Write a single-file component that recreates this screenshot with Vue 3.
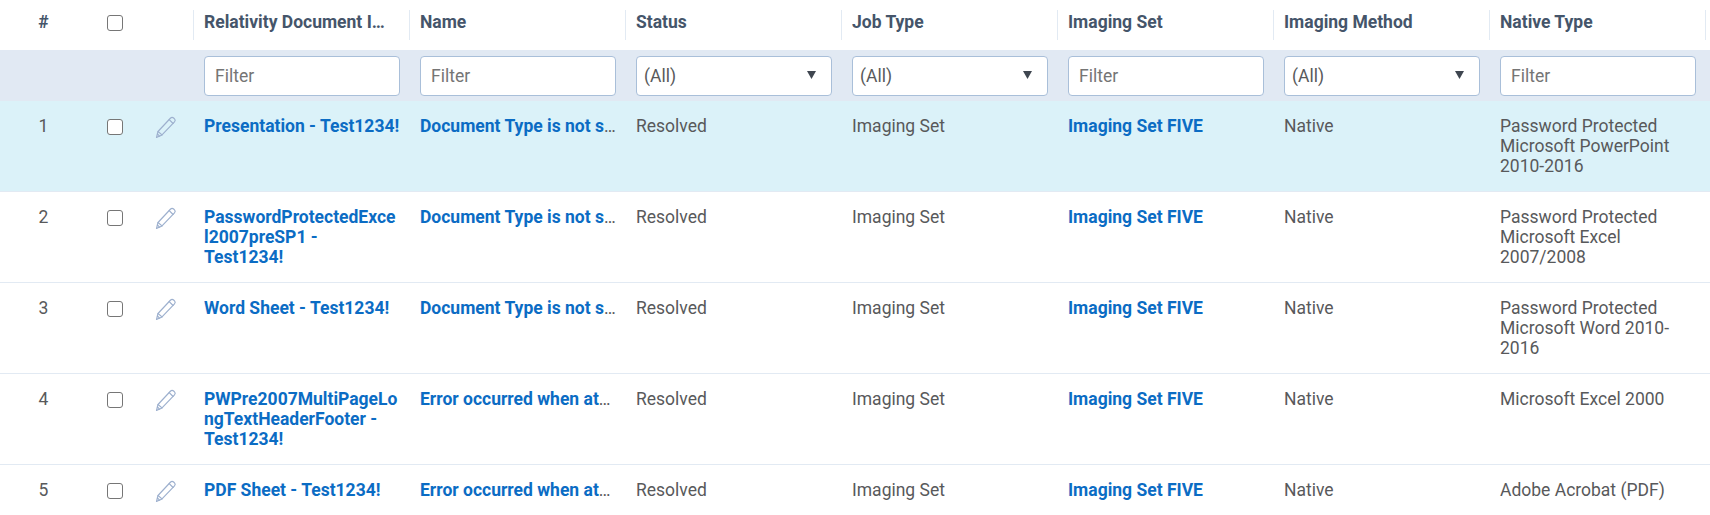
<script setup>
const columns = [
  { label: 'Relativity Document Identifier', filter: 'input' },
  { label: 'Name', filter: 'input' },
  { label: 'Status', filter: 'select' },
  { label: 'Job Type', filter: 'select' },
  { label: 'Imaging Set', filter: 'input' },
  { label: 'Imaging Method', filter: 'select' },
  { label: 'Native Type', filter: 'input' },
]
const typeErr = 'Document Type is not supported'
const attemptErr = 'Error occurred when attempting to image'
const rows = [
  { n: 1, doc: 'Presentation - Test1234!', name: typeErr, native: 'Password Protected Microsoft PowerPoint 2010-2016', active: true },
  { n: 2, doc: 'PasswordProtectedExcel2007preSP1 - Test1234!', name: typeErr, native: 'Password Protected Microsoft Excel 2007/2008' },
  { n: 3, doc: 'Word Sheet - Test1234!', name: typeErr, native: 'Password Protected Microsoft Word 2010-2016' },
  { n: 4, doc: 'PWPre2007MultiPageLongTextHeaderFooter - Test1234!', name: attemptErr, native: 'Microsoft Excel 2000' },
  { n: 5, doc: 'PDF Sheet - Test1234!', name: attemptErr, native: 'Adobe Acrobat (PDF)' },
]
</script>

<template>
  <div class="table">
    <div class="row head">
      <div class="num">#</div>
      <div class="check"><input type="checkbox" class="box" /></div>
      <div class="edit"></div>
      <div v-for="c in columns" :key="c.label" class="th">
        <span class="clip">{{ c.label }}</span>
      </div>
      <div class="th end"></div>
    </div>
    <div class="row filters">
      <div></div>
      <div></div>
      <div></div>
      <div v-for="c in columns" :key="c.label" class="fcell">
        <input v-if="c.filter === 'input'" class="field" placeholder="Filter" />
        <div v-else class="field pick">
          <span>(All)</span>
          <svg class="tri" width="9" height="8" viewBox="0 0 9 8"><path d="M0 0h9L4.5 8z" /></svg>
        </div>
      </div>
      <div></div>
    </div>
    <div v-for="r in rows" :key="r.n" class="row data" :class="{ active: r.active }">
      <div class="num">{{ r.n }}</div>
      <div class="check"><input type="checkbox" class="box" /></div>
      <div class="edit">
        <svg width="22" height="24" viewBox="0 0 22 24" fill="none" stroke="#9db0ce" stroke-width="1.15" stroke-linejoin="round" stroke-linecap="round">
          <path d="M1.5 22.5l1.5-6L15.6 3c.8-.9 2.1-.9 3 0l.9.9c.8.8.8 2.1 0 2.9L7 19.9z" />
          <path d="M14.2 4.6l3.9 3.9M3 16.5l4 3.4M2.4 19l2.2 2.1" />
        </svg>
      </div>
      <div class="td link wrap">{{ r.doc }}</div>
      <div class="td"><span class="clip"><span class="link">{{ r.name }}</span></span></div>
      <div class="td">Resolved</div>
      <div class="td">Imaging Set</div>
      <div class="td link">Imaging Set FIVE</div>
      <div class="td">Native</div>
      <div class="td wrap">{{ r.native }}</div>
      <div></div>
    </div>
  </div>
</template>

<style>
html, body {
  margin: 0;
  background: #fff;
  overflow: hidden;
}
</style>

<style scoped>
.table {
  width: 1710px;
  font-family: Roboto, "Liberation Sans", sans-serif;
  font-size: 17.5px;
  line-height: 20px;
  color: #58595b;
}
.row {
  display: grid;
  grid-template-columns: 86px 58px 49px repeat(7, 216px) 5px;
}
.head {
  height: 50px;
  align-items: center;
  font-weight: 700;
  color: #45556a;
}
.th {
  height: 30px;
  line-height: 24px;
  padding: 0 20px 0 10px;
  border-left: 1px solid #e2eaf3;
  box-sizing: border-box;
  min-width: 0;
}
.th.end {
  padding: 0;
}
.head .num {
  line-height: 24px;
  height: 30px;
}
.clip {
  display: block;
  white-space: nowrap;
  overflow: hidden;
  text-overflow: ellipsis;
}
.filters {
  height: 51px;
  background: #e1e9f3;
  align-items: center;
}
.fcell {
  padding: 0 9px 0 11px;
  min-width: 0;
}
.field {
  display: block;
  width: 100%;
  height: 40px;
  box-sizing: border-box;
  border: 1px solid #a9bfd9;
  border-radius: 4px;
  background: #fff;
  padding: 0 10px;
  font: 17.5px Roboto, "Liberation Sans", sans-serif;
  color: #58595b;
  outline: none;
}
.field::placeholder {
  color: #757575;
  opacity: 1;
}
.pick {
  display: flex;
  align-items: center;
  justify-content: space-between;
  padding: 0 15px 0 7px;
}
.tri {
  fill: #3f4650;
  margin-top: -2px;
}
.data {
  height: 91px;
  box-sizing: border-box;
  border-bottom: 1px solid #e2eaf3;
}
.data.active {
  background: #dbf2f9;
}
.num {
  text-align: center;
  padding-left: 1px;
}
.data .num {
  padding-top: 15px;
}
.check {
  display: flex;
  justify-content: center;
}
.data .check {
  padding-top: 18px;
  align-items: flex-start;
}
.head .check {
  align-items: center;
  padding-bottom: 4px;
}
.box {
  appearance: none;
  width: 16px;
  height: 16px;
  margin: 0;
  box-sizing: border-box;
  border: 1px solid #767676;
  border-radius: 3px;
  background: #fff;
}
.edit {
  padding: 14px 0 0 11px;
}
.td {
  padding: 15px 9px 0 11px;
  min-width: 0;
}
.link {
  color: #0b6cc4;
  font-weight: 700;
}
.wrap {
  overflow-wrap: anywhere;
}
</style>
